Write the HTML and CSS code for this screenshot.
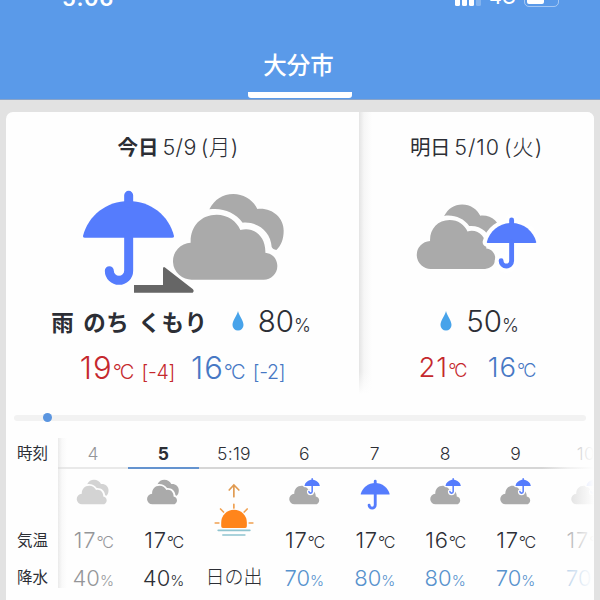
FILE: index.html
```html
<!DOCTYPE html>
<html lang="ja">
<head>
    <meta charset="UTF-8">
    <meta name="viewport" content="width=device-width, initial-scale=1.0">
    <title>大分市の天気</title>
    <link rel="stylesheet" href="styles.css">
</head>
<body>
    <svg class="defs">
        <defs>
            <g id="umbrella">
                <path d="M69 348C84 287 140 243 206 243S327 287 342 348Q343 353 337 353H74Q68 353 69 348Z" fill="currentColor" stroke="none"/>
                <path d="M206 226V250M206 345V452A29 29 0 0 1 148 452" fill="none" stroke="currentColor" stroke-width="27" stroke-linecap="round"/>
            </g>
            <g id="umbrella-edge">
                <path d="M69 348C84 287 140 243 206 243S327 287 342 348Q343 353 337 353H74Q68 353 69 348Z" fill="#fff" stroke="#fff" stroke-width="46"/>
                <path d="M206 226V452A29 29 0 0 1 148 452" fill="none" stroke="#fff" stroke-width="72" stroke-linecap="round"/>
            </g>
            <path id="cloud" d="M397 479A55.500 55.500 0 0 1 392 368C390 320 422 284 470 284C503 284 530 303 541 330C582 318 618 350 616 398C637 400 652 417 652 438C652 462 633 479 611 479Z"/>
            <path id="cloud-back" d="M448 268C464 238 488 222 520 222C552 222 580 241 592 267C635 262 671 292 671 332C671 356 664 376 649 390C642 389 637 386 635 381C632 334 593 304 548 308C525 276 486 262 448 268Z"/>
            <g id="clouds">
                <use href="#cloud-back"/>
                <use href="#cloud"/>
            </g>
            <g id="cloud-rain">
                <use href="#cloud" class="gray" transform="translate(-12.2 -10.5) scale(.0957)"/>
                <g class="blue" transform="translate(31.6 -2.900) scale(.0562)">
                    <use href="#umbrella-edge"/>
                    <use href="#umbrella"/>
                </g>
            </g>
        </defs>
    </svg>

    <header class="header">
        <div class="status-bar">
            <span class="clock">5:06</span>
            <div class="status-icons">
                <div class="signal"><i></i><i></i><i></i><i class="off"></i></div>
                <span class="network">4G</span>
                <div class="battery"><i></i></div>
            </div>
        </div>
        <div class="tab">大分市</div>
    </header>

    <main class="card">
        <section class="days">
            <div class="day today">
                <h2 class="date"><b>今日</b><span>5/9</span><span>(月)</span></h2>
                <svg class="day-icon" viewBox="0 195 720 345">
                    <use href="#umbrella" class="blue"/>
                    <use href="#clouds" class="gray"/>
                    <path d="M222 495H309V447Q309 438 316 443L398 507Q404 513 398 518H222Z" fill="#666"/>
                </svg>
                <div class="summary">
                    <b class="weather">雨 のち くもり</b>
                    <svg class="drop" viewBox="0 0 12 20"><path d="M6 0C7 5 11.500 9 11.500 14A5.500 5.500 0 0 1 .5 14C.5 9 5 5 6 0Z"/></svg>
                    <span class="rain">80<small>%</small></span>
                </div>
                <div class="temps">
                    <span class="high">19<small>°C</small><em>[-4]</em></span>
                    <span class="low">16<small>°C</small><em>[-2]</em></span>
                </div>
            </div>
            <div class="day tomorrow">
                <h2 class="date"><span class="kanji">明日</span><span>5/10</span><span>(火)</span></h2>
                <svg class="day-icon" viewBox="0 225 702 345">
                    <use href="#clouds" class="gray" transform="translate(-25 116) scale(.753)"/>
                    <g class="blue" transform="translate(403 207) scale(.543)">
                        <use href="#umbrella-edge"/>
                        <use href="#umbrella"/>
                    </g>
                </svg>
                <div class="summary">
                    <svg class="drop" viewBox="0 0 12 20"><path d="M6 0C7 5 11.500 9 11.500 14A5.500 5.500 0 0 1 .5 14C.5 9 5 5 6 0Z"/></svg>
                    <span class="rain">50<small>%</small></span>
                </div>
                <div class="temps">
                    <span class="high">21<small>°C</small></span>
                    <span class="low">16<small>°C</small></span>
                </div>
            </div>
        </section>

        <div class="slider"><i></i></div>

        <section class="hourly">
            <div class="labels">
                <span class="l-time">時刻</span>
                <span class="l-temp">気温</span>
                <span class="l-rain">降水</span>
            </div>
            <div class="hours">
                <div class="hour past">
                    <div class="time">4</div>
                    <svg class="icon" viewBox="0 0 70 54"><use href="#clouds" class="gray" transform="translate(-13.700 -10.5) scale(.0957)"/></svg>
                    <div class="temp">17<small>°C</small></div>
                    <div class="pop">40<small>%</small></div>
                </div>
                <div class="hour now">
                    <div class="time">5</div>
                    <svg class="icon" viewBox="0 0 70 54"><use href="#clouds" class="gray" transform="translate(-13.4 -10.5) scale(.0957)"/></svg>
                    <div class="temp">17<small>°C</small></div>
                    <div class="pop">40<small>%</small></div>
                </div>
                <div class="hour sunrise">
                    <div class="time">5:19</div>
                    <svg class="icon" viewBox="0 0 70 90">
                        <g transform="translate(1.2 -40) scale(.3333)" fill="none" stroke-width="5" stroke-linecap="round">
                            <path d="M101 203V168M87 183L101 168L116 183" stroke="#e09a50"/>
                            <path d="M101 226V237M61 240L70 249M141 240L132 249M45 282H56M147 282H158" stroke="#f0a050"/>
                            <path d="M68 297Q63 297 63 291V281A38.500 38.500 0 0 1 140 281V291Q140 297 135 297Z" fill="#ff851b"/>
                            <path d="M54 304H149M68 318H134" stroke="#8fc4cf"/>
                        </g>
                    </svg>
                    <div class="pop">日の出</div>
                </div>
                <div class="hour wet">
                    <div class="time">6</div>
                    <svg class="icon" viewBox="0 0 70 54"><use href="#cloud-rain"/></svg>
                    <div class="temp">17<small>°C</small></div>
                    <div class="pop">70<small>%</small></div>
                </div>
                <div class="hour wet">
                    <div class="time">7</div>
                    <svg class="icon" viewBox="0 0 70 54"><use href="#umbrella" class="blue" transform="translate(13.4 -11.8) scale(.106)"/></svg>
                    <div class="temp">17<small>°C</small></div>
                    <div class="pop">80<small>%</small></div>
                </div>
                <div class="hour wet">
                    <div class="time">8</div>
                    <svg class="icon" viewBox="0 0 70 54"><use href="#cloud-rain"/></svg>
                    <div class="temp">16<small>°C</small></div>
                    <div class="pop">80<small>%</small></div>
                </div>
                <div class="hour wet">
                    <div class="time">9</div>
                    <svg class="icon" viewBox="0 0 70 54"><use href="#cloud-rain"/></svg>
                    <div class="temp">17<small>°C</small></div>
                    <div class="pop">70<small>%</small></div>
                </div>
                <div class="hour wet">
                    <div class="time">10</div>
                    <svg class="icon" viewBox="0 0 70 54"><use href="#cloud-rain"/></svg>
                    <div class="temp">17<small>°C</small></div>
                    <div class="pop">70<small>%</small></div>
                </div>
            </div>
        </section>
    </main>
</body>
</html>
```
FILE: styles.css
```css
* {
    box-sizing: border-box;
}
body {
    margin: 0;
    width: 600px;
    height: 600px;
    overflow: hidden;
    background: #e2e2e2;
    color: #2c2e35;
    font-family: Inter, "Noto Sans CJK JP", sans-serif;
    font-weight: 300;
}
small, em, i {
    font-style: normal;
}
.defs {
    display: block;
    width: 0;
    height: 0;
}
.blue {
    color: #557cfd;
}
.gray {
    fill: #aaa;
}

/* header */
.header {
    height: 100px;
    background: #5a9ae9;
    border-bottom: 1px solid #8aa4c8;
    color: #fff;
    display: flex;
    flex-direction: column;
    align-items: center;
}
.status-bar {
    width: 100%;
    height: 40px;
    padding: 0 41px 0 62px;
    display: flex;
    justify-content: space-between;
    align-items: flex-start;
}
.clock {
    margin-top: -15px;
    font-size: 22px;
    line-height: 26px;
    font-weight: 600;
    letter-spacing: .6px;
}
.status-icons {
    display: flex;
    align-items: flex-start;
}
.signal {
    display: flex;
    gap: 2px;
    margin-right: 8px;
}
.signal i {
    width: 5px;
    height: 6px;
    background: #fff;
    border-radius: 0 0 1.5px 1.5px;
}
.signal .off {
    opacity: .25;
}
.network {
    margin-top: -15px;
    font-size: 19px;
    line-height: 26px;
    font-weight: 500;
    margin-right: 8px;
}
.battery {
    width: 35px;
    height: 18px;
    margin-top: -11px;
    border: 1px solid rgba(255, 255, 255, .45);
    border-radius: 5px;
    padding: 2px;
}
.battery i {
    display: block;
    width: 17px;
    height: 12px;
    background: #fff;
    border-radius: 2px;
}
.tab {
    width: 104px;
    height: 58px;
    padding: 8px 3px 0 0;
    border-bottom: 6px solid #fff;
    border-radius: 3px;
    text-align: center;
    font-size: 23.500px;
    line-height: 36px;
    font-weight: 500;
}

/* card */
.card {
    width: 588px;
    height: 500px;
    margin: 12px 6px 0;
    background: #fefefe;
    border-radius: 7px 7px 0 0;
    overflow: hidden;
}
.days {
    display: flex;
    height: 282px;
}
.day {
    display: flex;
    flex-direction: column;
    align-items: center;
}
.today {
    width: 353px;
}
.tomorrow {
    width: 235px;
    background: linear-gradient(rgba(254, 254, 254, 0) 92%, #fefefe), linear-gradient(90deg, #e4e4e4, #f6f6f6 5px, #fefefe 13px);
}
.date {
    display: flex;
    align-items: baseline;
    gap: 4px;
    margin: 19px 9px 0 0;
    height: 32px;
    line-height: 32px;
    font-size: 20.5px;
    font-weight: 300;
}
.date b {
    font-weight: 700;
}
.date span {
    font-size: 21.5px;
    letter-spacing: .4px;
}
.tomorrow .date {
    margin-right: 0;
}
.tomorrow .date span {
    letter-spacing: .9px;
}
.tomorrow .date .kanji {
    font-size: 20.5px;
    letter-spacing: -.3px;
    font-weight: 400;
}
.day-icon {
    width: 240px;
    height: 115px;
    margin: 22px 0 0 -5px;
}
.tomorrow .day-icon {
    width: 234px;
    margin-left: -39px;
}
.summary {
    display: flex;
    align-items: center;
    height: 42px;
}
.today .summary {
    margin-right: 3px;
}
.weather {
    font-size: 22.5px;
    font-weight: 700;
    letter-spacing: .6px;
    word-spacing: 3px;
}
.drop {
    width: 12px;
    height: 20px;
    margin: 0 14px 0 24px;
    fill: #47a3ea;
}
.tomorrow .drop {
    margin: 0 14px 0 6px;
}
.rain {
    font-size: 29.5px;
}
.rain small {
    font-size: 18px;
}
.temps {
    display: flex;
    align-items: center;
    gap: 16px;
    height: 50px;
    font-size: 31px;
    letter-spacing: 1px;
}
.temps small {
    font-size: 20px;
    letter-spacing: -1.8px;
}
.temps em {
    margin-left: 9px;
    font-size: 19.5px;
    letter-spacing: -.3px;
}
.tomorrow .temps {
    font-size: 27.5px;
    gap: 22px;
}
.tomorrow .temps small {
    font-size: 18px;
}
.high {
    color: #c5282d;
}
.low {
    color: #4778c4;
}

/* slider */
.slider {
    height: 6px;
    margin: 21px 8px 0;
    background: #f2f2f2;
    border-radius: 3px;
}
.slider i {
    display: block;
    position: relative;
    left: 29px;
    top: -2px;
    width: 9px;
    height: 9px;
    border-radius: 50%;
    background: #5a95e0;
}

/* hourly table */
.hourly {
    position: relative;
    display: flex;
    margin-top: 17px;
}
.hourly::after {
    content: "";
    position: absolute;
    top: 0;
    right: 0;
    width: 52px;
    height: 162px;
    background: linear-gradient(90deg, rgba(254, 254, 254, 0), rgba(254, 254, 254, .65) 50%, #fefefe);
}
.labels {
    width: 52px;
    padding-left: 11px;
    display: flex;
    flex-direction: column;
    font-size: 15.5px;
    font-weight: 400;
}
.labels span {
    height: 37px;
    line-height: 34px;
}
.labels .l-time {
    height: 86px;
    line-height: 32px;
}
.hours {
    display: flex;
    width: 536px;
    height: 162px;
    overflow: hidden;
    background: linear-gradient(90deg, #eaeaea, #f9f9f9 4px, #fefefe 9px) 0 0 / 100% 150px no-repeat;
}
.hour {
    flex: 0 0 70.4px;
    text-align: center;
}
.time {
    height: 31px;
    line-height: 31px;
    border-bottom: 2px solid #d6d6d6;
    font-size: 17.500px;
    letter-spacing: .3px;
    font-weight: 300;
}
.icon {
    display: block;
    width: 70px;
    height: 54px;
}
.sunrise .icon {
    height: 90px;
}
.temp {
    height: 36px;
    line-height: 35px;
    font-size: 22px;
    letter-spacing: .8px;
}
.pop {
    height: 38px;
    line-height: 38px;
    font-size: 22px;
}
.pop small {
    font-size: 15px;
}
.temp small {
    font-size: 16px;
    letter-spacing: -1.3px;
}
.sunrise .pop {
    font-size: 19px;
}
.past {
    opacity: .5;
}
.now .time {
    font-weight: 700;
    border-color: #6493cf;
}
.wet .pop {
    color: #5792cd;
}
```
